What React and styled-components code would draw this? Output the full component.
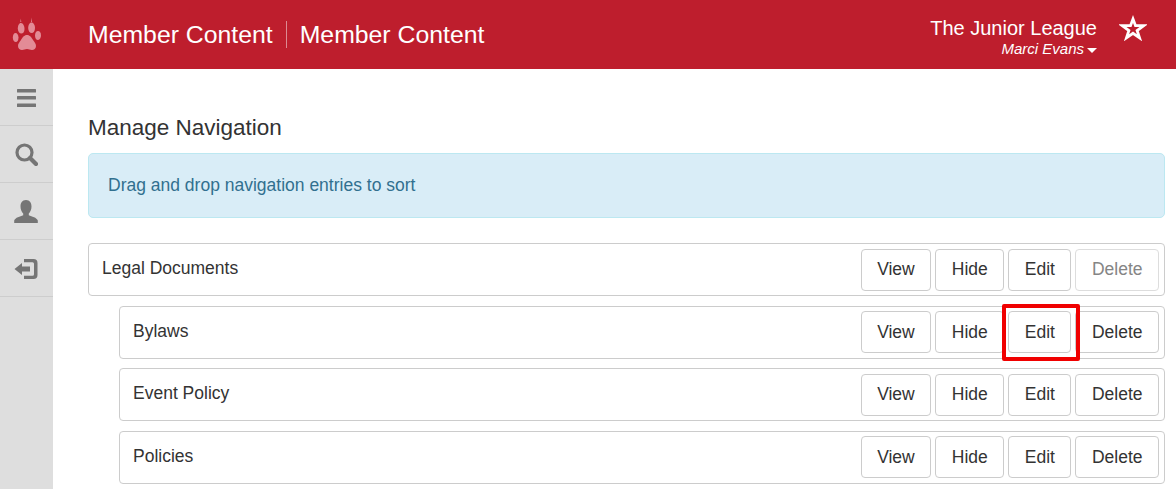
import React from "react";
import styled, { createGlobalStyle } from "styled-components";

const GlobalStyle = createGlobalStyle`
	html, body {
		margin: 0;
		padding: 0;
		height: 489px;
		overflow: hidden;
		background: #fff;
		font-family: "Liberation Sans", Arial, sans-serif;
		color: #333;
	}
`;

const Page = styled.div`
	display: flex;
	flex-direction: column;
	height: 489px;
	overflow: hidden;
`;

const Header = styled.header`
	flex: 0 0 69px;
	display: flex;
	align-items: center;
	background: #be1e2d;
	color: #fff;
`;

const LogoSlot = styled.div`
	flex: 0 0 88px;
	display: flex;
	padding-left: 12px;
	box-sizing: border-box;
`;

const HeaderTitle = styled.div`
	font-size: 24.8px;
	line-height: 27px;
	padding: 0 13px 0 0;
	& + & {
		padding-left: 13px;
		border-left: 1px solid #dc8a92;
	}
`;

const HeaderRight = styled.div`
	margin-left: auto;
	align-self: flex-start;
	display: flex;
	padding: 15px 29px 0 0;
`;

const Account = styled.div`
	display: flex;
	flex-direction: column;
	align-items: flex-end;
	margin-right: 22px;
`;

const Org = styled.div`
	font-size: 20px;
	line-height: 24px;
	margin-top: 1px;
`;

const UserName = styled.div`
	display: flex;
	align-items: center;
	font-size: 15px;
	font-style: italic;
	line-height: 18px;
`;

const Caret = styled.span`
	width: 0;
	height: 0;
	margin-left: 3px;
	margin-top: 2px;
	border-left: 5px solid transparent;
	border-right: 5px solid transparent;
	border-top: 5px solid #fff;
`;

const Body = styled.div`
	flex: 1;
	display: flex;
	min-height: 0;
`;

const Sidebar = styled.nav`
	flex: 0 0 53px;
	background: #dedede;
`;

const SideItem = styled.div`
	box-sizing: border-box;
	height: 57px;
	padding: 1px 1px 0 0;
	border-bottom: 1px solid #cdcdcd;
	display: flex;
	align-items: center;
	justify-content: center;
	color: #757575;
`;

const Main = styled.main`
	flex: 1;
	padding: 44px 11px 0 35px;
	min-width: 0;
`;

const Title = styled.h1`
	margin: 0 0 11px;
	font-size: 22.5px;
	font-weight: 400;
	line-height: 29px;
	color: #333;
`;

const Alert = styled.div`
	box-sizing: border-box;
	height: 65px;
	margin-bottom: 25px;
	padding: 0 19px;
	display: flex;
	align-items: center;
	font-size: 17.5px;
	color: #31708f;
	background: #d9edf7;
	border: 1px solid #bce8f1;
	border-radius: 5px;
`;

const Row = styled.div`
	box-sizing: border-box;
	height: 53px;
	margin: 0 0 9.5px ${(p) => (p.$nested ? "31px" : "0")};
	padding: 0 5px 0 13px;
	display: flex;
	align-items: center;
	justify-content: space-between;
	background: #fff;
	border: 1px solid #ccc;
	border-radius: 4px;
`;

const RowLabel = styled.span`
	font-size: 17.5px;
	line-height: 24px;
	margin-bottom: 3px;
	color: #333;
`;

const Actions = styled.div`
	display: flex;
	gap: 4px;
`;

const ActionSlot = styled.div`
	position: relative;
	display: flex;
`;

const Button = styled.button`
	box-sizing: border-box;
	height: 42px;
	padding: 0 15.5px;
	font-family: inherit;
	font-size: 17.5px;
	color: #333;
	background: #fff;
	border: 1px solid #ccc;
	border-radius: 4px;
	&:disabled {
		color: #858585;
		border-color: #ddd;
	}
`;

const Highlight = styled.span`
	position: absolute;
	top: -7px;
	right: -9px;
	bottom: -8px;
	left: -6px;
	border: 4px solid #f00000;
	border-radius: 2px;
	pointer-events: none;
`;

const PawIcon = () => (
	<svg width="30" height="36" viewBox="0 0 30 36" fill="#e38b96">
		<path d="M15 18c3 0 4.500 2.500 6 5 1.500 2.200 3 3.500 3 6 0 2.500-2 4-4 4-2 0-3-1-5-1s-3 1-5 1c-2 0-4-1.500-4-4 0-2.500 1.500-3.800 3-6 1.500-2.500 3-5 6-5z" />
		<path d="M9 6c2 0 3.500 3 3.500 6s-1.500 4.500-3.200 4.500S5.800 14.500 5.800 11.500 7 6 9 6z" />
		<path d="M9.300 5 8.800 1.500 8.300 5z" />
		<path d="M19.500 5.500c2 0 3.500 2.500 3.500 5.500s-1.500 5-3.300 5-3.500-2-3.500-5 1.300-5.500 3.300-5.500z" />
		<path d="M20 5 20 0.500 19 5z" />
		<path d="M3.500 16c1.500 0 3 2 3 4.500S5.500 25 3.800 25 .8 23 .8 20.500 2 16 3.500 16z" />
		<path d="M26 14c1.800 0 3 1.800 3 4.300S27.800 23 26 23s-3-2-3-4.500 1.200-4.500 3-4.500z" />
	</svg>
);

const StarIcon = () => (
	<svg width="28" height="26" viewBox="0 0 28 26" fill="none" stroke="#fff" strokeWidth="2.800" strokeLinejoin="miter">
		<path d="M14 4 16.500 10.700H24.700L18.100 15.500 20.500 22.800 14 18.300 7.500 22.800 9.900 15.500 3.300 10.700H11.500z" />
	</svg>
);

const MenuIcon = () => (
	<svg width="19" height="18" viewBox="0 0 19 18" fill="currentColor">
		<rect width="19" height="3.600" rx="0.5" />
		<rect y="7" width="19" height="3.600" rx="0.5" />
		<rect y="14.400" width="19" height="3.600" rx="0.5" />
	</svg>
);

const SearchIcon = () => (
	<svg width="23" height="23" viewBox="0 0 23 23" fill="none" stroke="currentColor">
		<circle cx="9.500" cy="9.500" r="7.500" strokeWidth="3.200" />
		<path d="M15 15 21 21" strokeWidth="4.200" strokeLinecap="round" />
	</svg>
);

const UserIcon = () => (
	<svg width="24" height="23" viewBox="0 0 24 23" fill="currentColor">
		<path d="M12 0c4 0 5.500 3 5.500 6.500 0 3-1.200 5.500-2.700 7v1.700c3 1.200 8 2.300 9 5.300V23H.2v-2.500c1-3 6-4.100 9-5.300v-1.700C7.700 12 6.500 9.500 6.500 6.500 6.500 3 8 0 12 0z" />
	</svg>
);

const LogoutIcon = () => (
	<svg width="24" height="20" viewBox="0 0 24 20" fill="currentColor">
		<path d="M10 0h9.500A4 4 0 0 1 23.500 4v12a4 4 0 0 1-4 4H10v-3.300h8.500a1.500 1.500 0 0 0 1.500-1.500V4.800a1.500 1.500 0 0 0-1.500-1.500H10z" />
		<path d="M.5 10 8 4v3.500h8v5H8V16z" />
	</svg>
);

const sideItems = [MenuIcon, SearchIcon, UserIcon, LogoutIcon];

const entries = [
	{ label: "Legal Documents", locked: true },
	{ label: "Bylaws", nested: true, marked: true },
	{ label: "Event Policy", nested: true },
	{ label: "Policies", nested: true },
];

export default function App() {
	return (
		<Page>
			<GlobalStyle />
			<Header>
				<LogoSlot>
					<PawIcon />
				</LogoSlot>
				<HeaderTitle>Member Content</HeaderTitle>
				<HeaderTitle>Member Content</HeaderTitle>
				<HeaderRight>
					<Account>
						<Org>The Junior League</Org>
						<UserName>
							Marci Evans
							<Caret />
						</UserName>
					</Account>
					<StarIcon />
				</HeaderRight>
			</Header>
			<Body>
				<Sidebar>
					{sideItems.map((Icon, i) => (
						<SideItem key={i}>
							<Icon />
						</SideItem>
					))}
				</Sidebar>
				<Main>
					<Title>Manage Navigation</Title>
					<Alert>Drag and drop navigation entries to sort</Alert>
					{entries.map((entry) => (
						<Row key={entry.label} $nested={entry.nested}>
							<RowLabel>{entry.label}</RowLabel>
							<Actions>
								<Button>View</Button>
								<Button>Hide</Button>
								<ActionSlot>
									<Button>Edit</Button>
									{entry.marked && <Highlight />}
								</ActionSlot>
								<Button disabled={entry.locked}>Delete</Button>
							</Actions>
						</Row>
					))}
				</Main>
			</Body>
		</Page>
	);
}
